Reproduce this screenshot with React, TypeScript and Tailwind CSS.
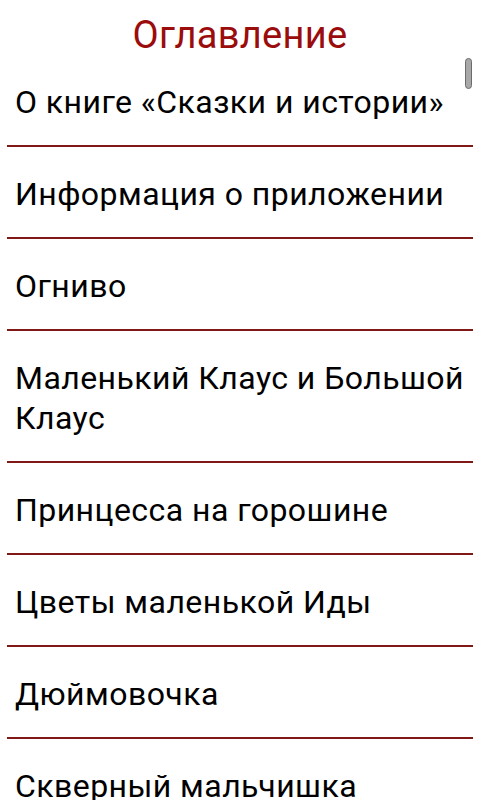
import React from 'react';

const chapters = [
  'О книге «Сказки и истории»',
  'Информация о приложении',
  'Огниво',
  'Маленький Клаус и Большой Клаус',
  'Принцесса на горошине',
  'Цветы маленькой Иды',
  'Дюймовочка',
  'Скверный мальчишка',
  'Спутник',
];

export default function App() {
  return (
    <div
      className="relative h-[800px] w-[480px] overflow-hidden bg-white"
      style={{ fontFamily: 'Roboto, "Noto Sans", sans-serif' }}
    >
      <header className="pt-[15px] text-center text-[38px] leading-[40px] tracking-[0.3px] text-[#9b0c0c]">
        Оглавление
      </header>

      {/* scroll thumb */}
      <div className="absolute left-[465px] top-[58px] h-[31px] w-[7px] rounded-full border border-[#6b6b6b] bg-[#a8a8a8]" />

      <ul className="px-[7px]">
        {chapters.map((title) => (
          <li
            key={title}
            className="border-b-2 border-[#801818] pl-[8px] pr-[4px] pt-[27px] pb-[23px] text-[32px] leading-[40px] tracking-[0.45px] text-black"
          >
            {title}
          </li>
        ))}
      </ul>
    </div>
  );
}
